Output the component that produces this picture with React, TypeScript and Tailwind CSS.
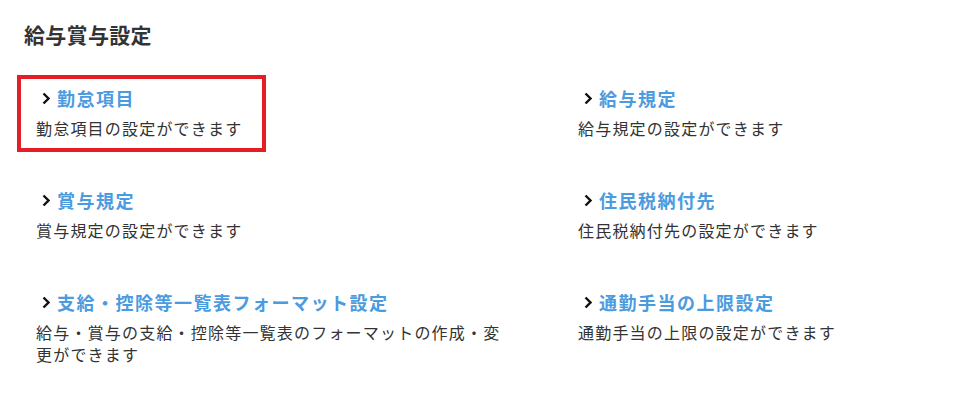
const items = [
  { title: '勤怠項目', desc: '勤怠項目の設定ができます', highlight: true },
  { title: '給与規定', desc: '給与規定の設定ができます' },
  { title: '賞与規定', desc: '賞与規定の設定ができます' },
  { title: '住民税納付先', desc: '住民税納付先の設定ができます' },
  { title: '支給・控除等一覧表フォーマット設定', desc: '給与・賞与の支給・控除等一覧表のフォーマットの作成・変更ができます' },
  { title: '通勤手当の上限設定', desc: '通勤手当の上限の設定ができます' },
]

function Chevron() {
  return (
    <svg width="8" height="13" viewBox="0 0 8 13" className="shrink-0 ml-[6px] mr-[7px]">
      <polyline points="1.5,1.5 6.5,6.5 1.5,11.5" fill="none" stroke="#111" strokeWidth="2.4" />
    </svg>
  )
}

export default function App() {
  return (
    <div
      className="w-[964px] h-[411px] bg-white px-[17px] pt-5 text-[#333]"
      style={{ fontFamily: '"Noto Sans CJK JP", "Noto Sans", sans-serif' }}
    >
      <h1 className="pl-[7px] text-[21px] leading-[28px] font-bold tracking-[0.3px] text-[#333]">給与賞与設定</h1>

      <div className="mt-[27px] grid grid-cols-[542px_1fr] gap-y-[25px]">
        {items.map((item) => (
          <div key={item.title}>
            <div
              className={`inline-block border-4 pl-[15px] pr-5 pt-[6px] pb-[9px] ${
                item.highlight ? 'border-[#e51e25]' : 'border-transparent'
              }`}
            >
              <a href="#" className="flex items-center text-[18px] leading-[26px] font-bold tracking-[1.5px] text-[#4b9be0]">
                <Chevron />
                {item.title}
              </a>
              <p className="mt-[6px] max-w-[470px] text-[16px] leading-[22px] tracking-[1.2px] text-[#333]">{item.desc}</p>
            </div>
          </div>
        ))}
      </div>
    </div>
  )
}
